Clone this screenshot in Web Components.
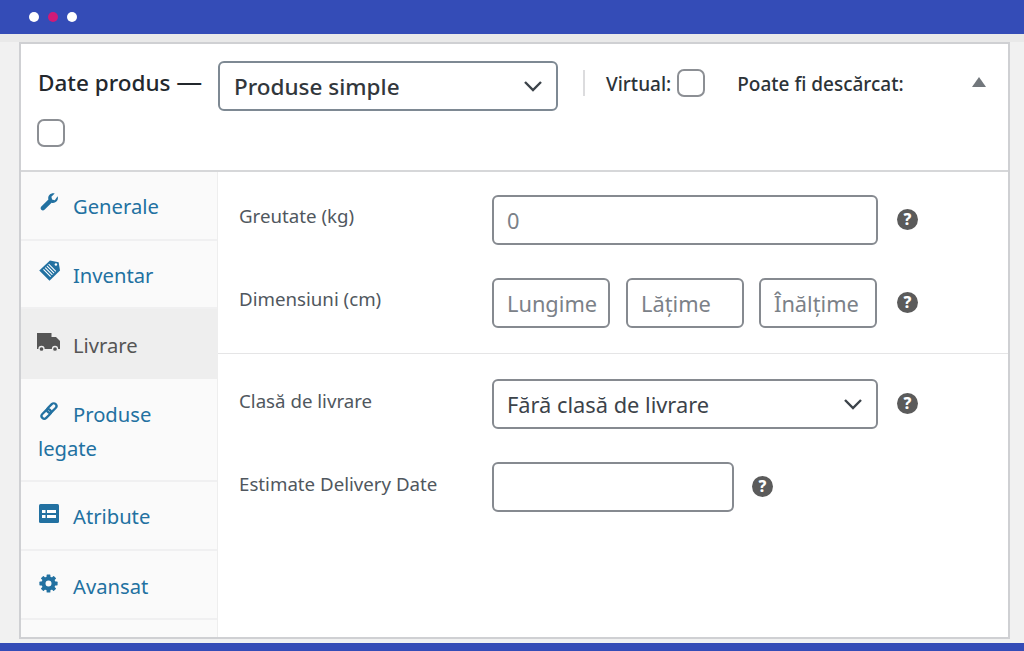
<!DOCTYPE html>
<html lang="ro"><head><meta charset="utf-8"><title>Date produs</title>
<style>
html,body{margin:0;height:100%}
body{font-family:"Noto Sans","Open Sans",sans-serif;background:#f1f1f1;overflow:hidden}
</style></head><body>
<app-frame>
  <product-panel>
    <side-tab slot="tabs" icon="wrench" style="height:69px">Generale</side-tab>
    <side-tab slot="tabs" icon="tag" style="height:68px;--pt:17px">Inventar</side-tab>
    <side-tab slot="tabs" icon="truck" active style="height:70px;--pt:19px">Livrare</side-tab>
    <side-tab slot="tabs" icon="link" style="height:103px;--pt:18px">Produse legate</side-tab>
    <side-tab slot="tabs" icon="card" style="height:69px;--pt:17px">Atribute</side-tab>
    <side-tab slot="tabs" icon="gear" style="height:69px;--pt:18px">Avansat</side-tab>
    <form-group style="height:182px;padding-top:23px;--lt:9px" divided>
      <form-row label="Greutate (kg)" style="margin-bottom:33px"><text-box style="flex:1" placeholder>0</text-box></form-row>
      <form-row label="Dimensiuni (cm)">
        <text-box style="width:118px" placeholder>Lungime</text-box>
        <text-box style="width:118px;margin-left:16px" placeholder>Lățime</text-box>
        <text-box style="width:118px;margin-left:15px" placeholder>Înălțime</text-box>
      </form-row>
    </form-group>
    <form-group style="padding-top:25px;--lt:10px">
      <form-row label="Clasă de livrare" style="margin-bottom:33px"><text-box style="flex:1" select>Fără clasă de livrare</text-box></form-row>
      <form-row label="Estimate Delivery Date" short><text-box style="width:242px"></text-box></form-row>
    </form-group>
  </product-panel>
</app-frame>
<script>
const def=(n,html)=>{customElements.define(n,class extends HTMLElement{
  connectedCallback(){ if(this.shadowRoot) return; const r=this.attachShadow({mode:'open'}); r.innerHTML=typeof html==='function'?html(this):html; }
});};
const C='#2271a1';
const teeth=[0,45,90,135,180,225,270,315].map(a=>`<rect x="7.6" y="0.4" width="3.800" height="4" rx=".6" transform="rotate(${a} 9.500 9.500)"/>`).join('');
const ICONS={
wrench:`<svg width="20" height="20" viewBox="0 0 20 20" fill="${C}" style="margin-left:1px"><path d="M18.600 3.200c.7 2 .2 4-1.200 5.300-1.300 1.300-3.100 1.700-4.800 1.200L5.500 16.800c-.9.900-2.300.9-3.200 0-.9-.9-.9-2.300 0-3.200l7.100-7.100c-.5-1.700-.1-3.500 1.200-4.800 1.300-1.300 3.300-1.800 5.100-1.200l-3.300 3.300.7 2.700 2.700.7z"/></svg>`,
tag:`<svg width="23" height="23" viewBox="0 0 24 24"><path fill="${C}" d="M12.500 1.500 21.500 3.300 23 12 12 22.700 1.300 12z"/><g stroke="#fff" stroke-width="1.100" fill="none"><path d="M7.500 9l7.500 7.500M9.300 7.200l7.500 7.500M11.100 5.400l7.500 7.500M5.700 10.800l7.500 7.500"/></g><circle cx="18.700" cy="5.700" r="1.300" fill="#fff"/></svg>`,
truck:`<svg width="23" height="19" viewBox="0 0 23 19" style="margin-left:-1px"><path fill="#555" d="M0 0h14.500v16H0zM14.500 4h4.500l4 4v8h-8.500z"/><circle cx="4.500" cy="16" r="2.500" fill="#555" stroke="#eee" stroke-width="1.300"/><circle cx="18" cy="16" r="2.500" fill="#555" stroke="#eee" stroke-width="1.300"/></svg>`,
link:`<svg width="20" height="20" viewBox="0 0 20 20" fill="none" stroke="${C}" stroke-width="2.300" style="margin-left:1px"><rect x="10" y="1.500" width="5.500" height="11" rx="2.750" transform="rotate(45 12.750 7)"/><rect x="4.500" y="7.500" width="5.500" height="11" rx="2.750" transform="rotate(45 7.250 13)"/></svg>`,
card:`<svg width="20" height="19" viewBox="0 0 20 19" style="margin-left:1px"><rect width="20" height="19" rx="1.500" fill="${C}"/><path fill="#fff" d="M3 6h3.500v3H3zM8 6h9v3H8zM3 11h3.500v3H3zM8 11h9v3H8z"/></svg>`,
gear:`<svg width="19" height="19" viewBox="0 0 19 19" fill="${C}" style="margin-left:1px">${teeth}<circle cx="9.500" cy="9.500" r="5" fill="none" stroke="${C}" stroke-width="4"/></svg>`
};
const chevron=`<svg width="20" height="12" viewBox="0 0 20 12" fill="none" stroke="#3c434a" stroke-width="2.400"><path d="M2 2l8 8 8-8"/></svg>`;
def('app-frame',`<style>
:host{display:flex;flex-direction:column;height:651px}
.top{height:34px;background:#344cb7;display:flex;align-items:center;gap:9px;padding:0 0 0 29px;box-sizing:border-box;flex:none}
.top i{width:10px;height:10px;border-radius:50%;background:#fff;margin-top:-1px}
.top i:nth-child(2){background:#d01a78}
main{flex:1;padding:8px 14px 4px 19px;min-height:0;background:linear-gradient(#e9e9e9 0 8px,#f1f1f1 8px)}
.bot{height:8px;background:#344cb7;flex:none}
</style><div class="top"><i></i><i></i><i></i></div><main><slot></slot></main><div class="bot"></div>`);
def('check-box',`<style>:host{display:inline-block;width:28px;height:28px;box-sizing:border-box;border:2px solid #8c8f94;border-radius:7px;background:#fff;flex:none}</style>`);
def('product-panel',`<style>
:host{display:flex;flex-direction:column;height:100%;box-sizing:border-box;border:2px solid #cfd0d3;background:#fff;color:#2c3338}
header{height:128px;box-sizing:border-box;border-bottom:2px solid #d6d7d9;padding:17px 0 0 17px;position:relative;flex:none}
.l1{display:flex;align-items:center}
h2{margin:-6px 0 0;font-size:22.500px;font-weight:500;line-height:50px;width:180px;color:#23282d;white-space:nowrap}
h2 span{font-size:26px;font-weight:400;line-height:20px}
.sel{width:340px;height:50px;box-sizing:border-box;border:2px solid #7e8993;border-radius:6px;display:flex;align-items:center;justify-content:space-between;padding:0 13px 0 14px;font-size:22.500px;font-weight:500;color:#32373c}
.sep{width:2px;height:26px;background:#dcdcde;margin:-6px 21px 0 25px}
.lab{font-size:19px;font-weight:500;color:#2c3338;margin-top:-4px;white-space:nowrap}
.cb1{margin:-7px 32px 0 6px}
.cb2{display:block;margin:8px 0 0 -1px}
.tri{position:absolute;right:22px;top:33px;width:0;height:0;border:7px solid transparent;border-top:0;border-bottom:10px solid #72777c}
.body{flex:1;display:flex;min-height:0}
nav{width:197px;background:#fafafa;border-right:1px solid #eee;flex:none;box-sizing:border-box}
section{flex:1;min-width:0}
</style>
<header><div class="l1"><h2>Date produs <span>—</span></h2><div class="sel">Produse simple ${chevron}</div><div class="sep"></div><span class="lab">Virtual:</span><check-box class="cb1"></check-box><span class="lab">Poate fi descărcat:</span></div>
<check-box class="cb2"></check-box><div class="tri"></div></header>
<div class="body"><nav><slot name="tabs"></slot></nav><section><slot></slot></section></div>`);
def('side-tab',h=>{const a=h.hasAttribute('active');return `<style>
:host{display:block;box-sizing:border-box;font-size:20.200px;line-height:34px;padding:var(--pt,17px) 10px 0 17px;color:${a?'#555':C};background:${a?'#eee':'transparent'};border-bottom:${a?'0':'2px solid #f0f0f1'}}
.ic{display:inline-flex;width:24px;height:24px;margin-right:11px;vertical-align:1px;align-items:flex-start}
</style><span class="ic">${ICONS[h.getAttribute('icon')]}</span><slot></slot>`});
def('form-group',h=>`<style>:host{display:block;box-sizing:border-box;${h.hasAttribute('divided')?'border-bottom:1px solid #e5e5e6;':''}}</style><slot></slot>`);
def('form-row',h=>{const s=h.hasAttribute('short');return `<style>
:host{display:flex;padding-left:21px}
.label{width:253px;font-size:18.700px;line-height:24px;color:#50575e;flex:none;padding-top:var(--lt,10px);white-space:nowrap}
.f{display:flex;width:${s?'242px':'386px'};flex:none}
.q{flex:none;width:21px;height:21px;border-radius:50%;background:#5b5b5b;color:#fff;font-size:16px;font-weight:800;line-height:21px;text-align:center;margin:14px 0 0 ${s?'18px':'19px'}}
</style><div class="label">${h.getAttribute('label')}</div><div class="f"><slot></slot></div><div class="q">?</div>`});
def('text-box',h=>{const sel=h.hasAttribute('select');return `<style>
:host{display:flex;box-sizing:border-box;height:50px;border:2px solid #868a90;border-radius:6px;align-items:center;justify-content:space-between;padding:0 13px 0 13px;font-size:21.800px;white-space:nowrap;background:#fff;color:${h.hasAttribute('placeholder')?'#7b8188':'#3c434a'};overflow:hidden}
</style><span><slot></slot></span>${sel?chevron:''}`});
</script>
</body></html>
